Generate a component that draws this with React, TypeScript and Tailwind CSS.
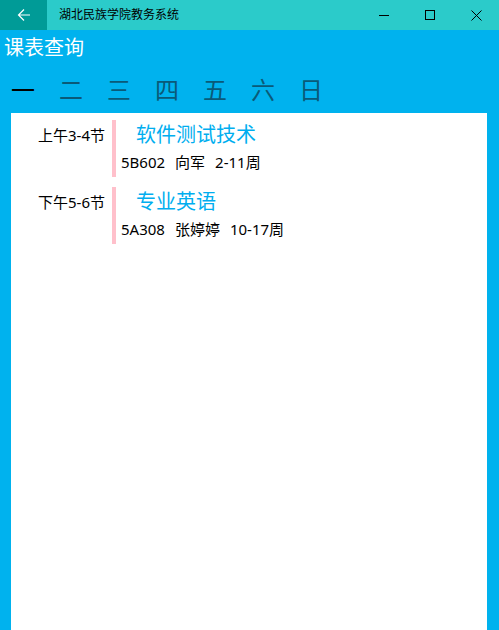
import React from "react";

const font = { fontFamily: '"Noto Sans", "Noto Sans CJK SC", sans-serif' };

const days = ["一", "二", "三", "四", "五", "六", "日"];

const courses = [
  { time: "上午3-4节", name: "软件测试技术", room: "5B602", teacher: "向军", weeks: "2-11周" },
  { time: "下午5-6节", name: "专业英语", room: "5A308", teacher: "张婷婷", weeks: "10-17周" },
];

export default function App() {
  return (
    <div className="w-[499px] h-[630px] bg-[#00b2ee] flex flex-col overflow-hidden" style={font}>
      <div className="h-[30px] bg-[#2bcbca] flex items-center shrink-0">
        <div className="w-[47px] h-full bg-[#009b97] flex items-center justify-center">
          <svg width="14" height="14" viewBox="0 0 14 14" fill="none" stroke="white" strokeWidth="1.2">
            <path d="M13 7H1.5M7 1.5L1.5 7L7 12.5" />
          </svg>
        </div>
        <div className="ml-[12px] text-[12px] text-black leading-none">湖北民族学院教务系统</div>
        <div className="ml-auto flex h-full">
          <div className="w-[46px] h-full flex items-center justify-center">
            <div className="w-[10px] h-px bg-black" />
          </div>
          <div className="w-[46px] h-full flex items-center justify-center">
            <div className="w-[10px] h-[10px] border border-black" />
          </div>
          <div className="w-[46px] h-full flex items-center justify-center">
            <svg width="11" height="11" viewBox="0 0 11 11" stroke="black" strokeWidth="1">
              <path d="M0.5 0.5L10.5 10.5M10.5 0.5L0.5 10.5" />
            </svg>
          </div>
        </div>
      </div>
      <div className="pl-[4px] pt-[3px] h-[40px] text-[20px] text-white leading-[30px]">课表查询</div>
      <div className="flex pl-[11px] gap-[24px] h-[39px] items-center">
        {days.map((d, i) => (
          <div
            key={d}
            className={"text-[24px] leading-none " + (i === 0 ? "text-black" : "text-[#0a5a78]")}
          >
            {d}
          </div>
        ))}
      </div>
      <div className="flex-1 mt-[4px] ml-[11px] mr-[12px] bg-white pt-[7px] flex flex-col gap-[10px]">
        {courses.map((c) => (
          <div key={c.name} className="flex h-[57px]">
            <div className="w-[94px] text-right text-[15px] text-black pt-[5px] leading-[20px]">{c.time}</div>
            <div className="ml-[7px] w-[4px] h-full bg-[#ffc0cb]" />
            <div className="flex flex-col">
              <div className="ml-[20px] text-[20px] text-[#00aeef] leading-[30px]">{c.name}</div>
              <div className="ml-[5px] mt-[2px] text-[15px] text-black leading-[20px] flex gap-[10px]">
                <span>{c.room}</span>
                <span>{c.teacher}</span>
                <span>{c.weeks}</span>
              </div>
            </div>
          </div>
        ))}
      </div>
    </div>
  );
}
